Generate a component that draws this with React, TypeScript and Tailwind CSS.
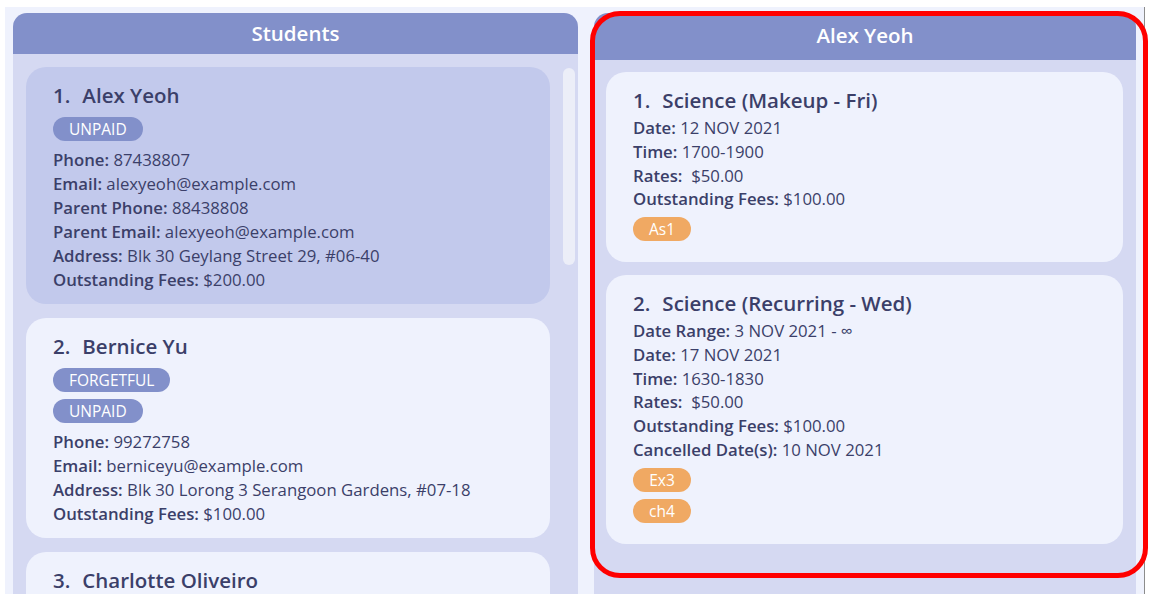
const font = { fontFamily: '"Open Sans", "Noto Sans", sans-serif' };

type Field = { label: string; value: string };

type Student = {
  index: number;
  name: string;
  tags: string[];
  fields: Field[];
  selected?: boolean;
};

type Lesson = {
  index: number;
  title: string;
  fields: Field[];
  tags: string[];
};

const students: Student[] = [
  {
    index: 1,
    name: "Alex Yeoh",
    tags: ["UNPAID"],
    selected: true,
    fields: [
      { label: "Phone:", value: "87438807" },
      { label: "Email:", value: "alexyeoh@example.com" },
      { label: "Parent Phone:", value: "88438808" },
      { label: "Parent Email:", value: "alexyeoh@example.com" },
      { label: "Address:", value: "Blk 30 Geylang Street 29, #06-40" },
      { label: "Outstanding Fees:", value: "$200.00" },
    ],
  },
  {
    index: 2,
    name: "Bernice Yu",
    tags: ["FORGETFUL", "UNPAID"],
    fields: [
      { label: "Phone:", value: "99272758" },
      { label: "Email:", value: "berniceyu@example.com" },
      { label: "Address:", value: "Blk 30 Lorong 3 Serangoon Gardens, #07-18" },
      { label: "Outstanding Fees:", value: "$100.00" },
    ],
  },
  {
    index: 3,
    name: "Charlotte Oliveiro",
    tags: ["UNPAID"],
    fields: [
      { label: "Phone:", value: "93210283" },
      { label: "Email:", value: "charlotte@example.com" },
    ],
  },
];

const lessons: Lesson[] = [
  {
    index: 1,
    title: "Science (Makeup - Fri)",
    fields: [
      { label: "Date:", value: "12 NOV 2021" },
      { label: "Time:", value: "1700-1900" },
      { label: "Rates:", value: " $50.00" },
      { label: "Outstanding Fees:", value: "$100.00" },
    ],
    tags: ["As1"],
  },
  {
    index: 2,
    title: "Science (Recurring - Wed)",
    fields: [
      { label: "Date Range:", value: "3 NOV 2021 - ∞" },
      { label: "Date:", value: "17 NOV 2021" },
      { label: "Time:", value: "1630-1830" },
      { label: "Rates:", value: " $50.00" },
      { label: "Outstanding Fees:", value: "$100.00" },
      { label: "Cancelled Date(s):", value: "10 NOV 2021" },
    ],
    tags: ["Ex3", "ch4"],
  },
];

function FieldList({ fields, tight }: { fields: Field[]; tight?: boolean }) {
  return (
    <div className="flex flex-col">
      {fields.map((f) => (
        <p
          key={f.label}
          className={`${
            tight ? "h-[23.75px] leading-[23.75px]" : "h-6 leading-6"
          } text-[16.75px] text-[#3b3f69] whitespace-pre`}
        >
          <span className="font-semibold">{f.label}</span> {f.value}
        </p>
      ))}
    </div>
  );
}

function Title({ index, text }: { index: number; text: string }) {
  return (
    <h2 className="h-6 leading-6 text-[20.5px] font-semibold text-[#3b3f69] flex">
      <span className="mr-[12px]">{index}.</span>
      <span>{text}</span>
    </h2>
  );
}

function StudentCard({ student }: { student: Student }) {
  return (
    <div
      className={`rounded-[20px] px-[27px] pt-4 pb-3 ${
        student.selected ? "bg-[#c2c9ec]" : "bg-[#eff2fd]"
      }`}
    >
      <Title index={student.index} text={student.name} />
      <div className="mt-[10px] flex flex-col items-start gap-[7px]">
        {student.tags.map((t) => (
          <span
            key={t}
            className="h-6 leading-6 px-4 rounded-full bg-[#8290ca] text-white text-[15.5px]"
          >
            {t}
          </span>
        ))}
      </div>
      <div className="mt-[7px]">
        <FieldList fields={student.fields} />
      </div>
    </div>
  );
}

function LessonCard({ lesson }: { lesson: Lesson }) {
  return (
    <div className="rounded-[20px] bg-[#eff2fd] px-[27px] pt-4 pb-[21px]">
      <Title index={lesson.index} text={lesson.title} />
      <div className="mt-1">
        <FieldList fields={lesson.fields} tight />
      </div>
      <div className="mt-[6px] flex flex-col items-start gap-[7px]">
        {lesson.tags.map((t) => (
          <span
            key={t}
            className="h-6 leading-6 w-[58px] text-center rounded-full bg-[#f0a963] text-white text-[15.5px]"
          >
            {t}
          </span>
        ))}
      </div>
    </div>
  );
}

export default function App() {
  return (
    <div className="relative w-[1161px] h-[594px] overflow-hidden bg-white" style={font}>
      <div className="ml-[5px] mt-[7px] w-[1140px] h-[587px] bg-[#eff2fd] border-r border-[#8c8c8c] flex gap-4 pl-2 pt-[6px]">
        {/* Students panel */}
        <section className="w-[565px] flex flex-col rounded-t-[14px] overflow-hidden">
          <header className="h-[41px] shrink-0 bg-[#8290ca] flex items-center justify-center text-white text-[20.5px] font-semibold">
            Students
          </header>
          <div className="flex-1 bg-[#d5d9f2] flex items-start pl-[13px] pt-[13px]">
            <div className="w-[524px] flex flex-col gap-[14px]">
              {students.map((s) => (
                <StudentCard key={s.index} student={s} />
              ))}
            </div>
            <div className="ml-[13px] mt-[1px] w-[12px] h-[197px] rounded-full bg-[#eceef8]" />
          </div>
        </section>

        {/* Lessons panel */}
        <section className="w-[542px] flex flex-col rounded-t-[14px] overflow-hidden">
          <header className="h-[47px] shrink-0 bg-[#8290ca] flex justify-center pt-[8px] leading-[28px] text-white text-[20.5px] font-semibold">
            Alex Yeoh
          </header>
          <div className="flex-1 bg-[#d5d9f2] pl-3 pt-3">
            <div className="w-[517px] flex flex-col gap-[13px]">
              {lessons.map((l) => (
                <LessonCard key={l.index} lesson={l} />
              ))}
            </div>
          </div>
        </section>
      </div>

      {/* red highlight annotation */}
      <div className="absolute left-[590px] top-[11px] w-[558px] h-[567px] rounded-[30px] border-[5px] border-[#ff0000] pointer-events-none" />
    </div>
  );
}
